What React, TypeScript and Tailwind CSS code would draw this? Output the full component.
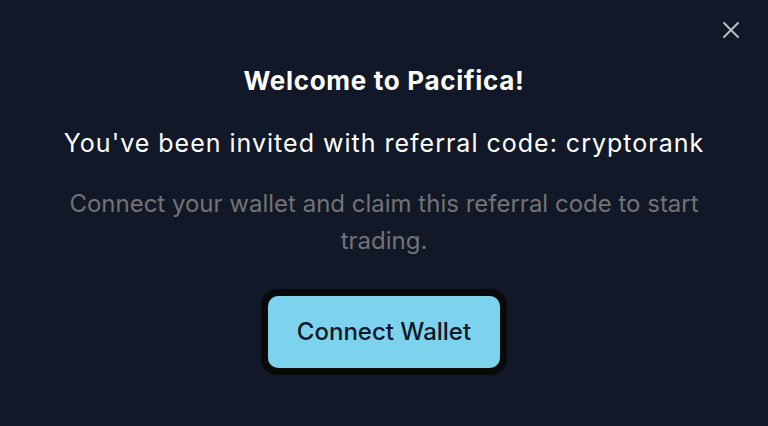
export default function App() {
    return (
        <div className="relative h-[426px] w-full bg-[#111827] font-['Inter',sans-serif] text-white overflow-hidden">
            <button className="absolute left-[722px] top-[21px] text-[#b8bcc6]">
                <svg viewBox="0 0 18 18" className="w-[18px] h-[18px]" fill="none" stroke="currentColor" strokeWidth={2} strokeLinecap="round">
                    <path d="M2 2L16 16M16 2L2 16" />
                </svg>
            </button>
            <div className="flex flex-col items-center pt-[65px] px-10 text-center">
                <h2 className="text-[26px] leading-[32px] font-bold tracking-[0.7px]">Welcome to Pacifica!</h2>
                <p className="mt-[30px] text-[25px] leading-[32px] tracking-[1px]">
                    You've been invited with referral code: cryptorank
                </p>
                <p className="mt-[26px] max-w-[660px] text-[24px] leading-[37px] text-[#737373]">
                    Connect your wallet and claim this referral code to start trading.
                </p>
                <div className="mt-[30px] rounded-[16px] bg-[#0a0a0a] p-[7px]">
                    <button className="w-[232px] h-[72px] rounded-[10px] bg-[#7dd3ee] text-[24px] font-medium text-[#111827]">
                        Connect Wallet
                    </button>
                </div>
            </div>
        </div>
    );
}
